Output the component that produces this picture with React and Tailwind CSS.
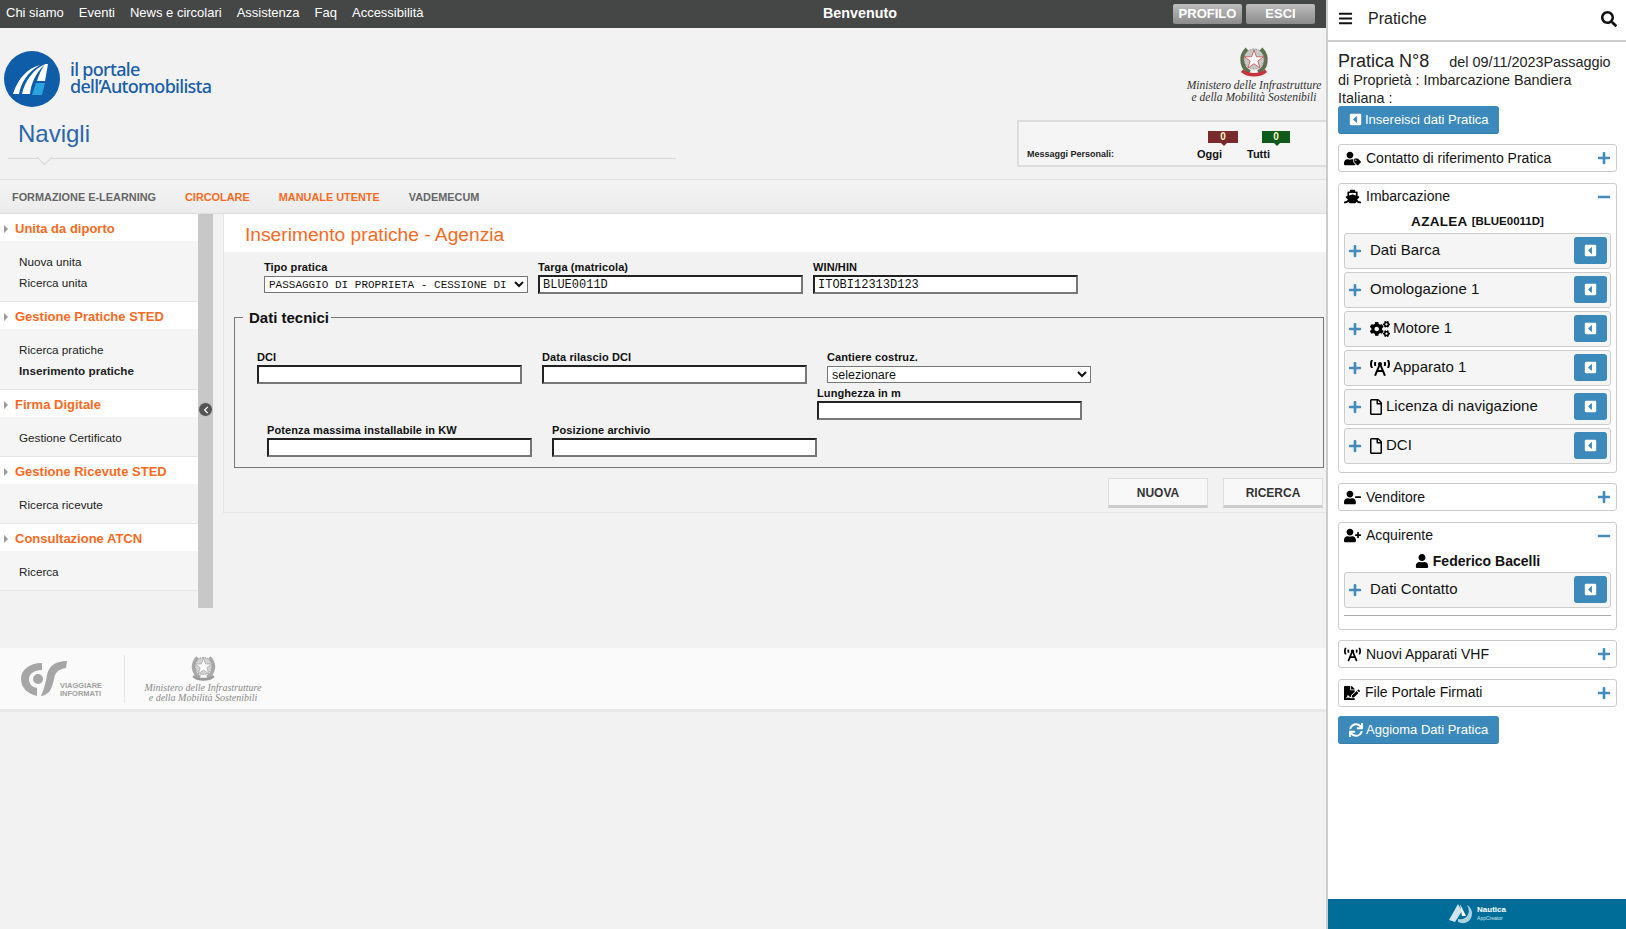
import {
	FaBars,
	FaBroadcastTower,
	FaCaretSquareLeft,
	FaChevronLeft,
	FaCogs,
	FaFileSignature,
	FaMinus,
	FaPlus,
	FaRegFile,
	FaSearch,
	FaShip,
	FaSync,
	FaUser,
	FaUserMinus,
	FaUserPlus,
	FaUserTag,
} from "react-icons/fa";

const topLinks = ["Chi siamo", "Eventi", "News e circolari", "Assistenza", "Faq", "Accessibilità"];

const sideMenu = [
	{ title: "Unita da diporto", items: ["Nuova unita", "Ricerca unita"] },
	{ title: "Gestione Pratiche STED", items: ["Ricerca pratiche", "Inserimento pratiche"] },
	{ title: "Firma Digitale", items: ["Gestione Certificato"] },
	{ title: "Gestione Ricevute STED", items: ["Ricerca ricevute"] },
	{ title: "Consultazione ATCN", items: ["Ricerca"] },
];

function PortaleLogo() {
	return (
		<svg width="56" height="56" viewBox="0 0 56 56">
			<circle cx="28" cy="28" r="28" fill="#0f5ca8" />
			<path d="M9 43L15 43C17 31 24 21 36 14C24 17 14 27 9 43Z" fill="#fff" />
			<path d="M18 43L26 43C27 33 31 23 41 13C30 18 21 29 18 43Z" fill="#fff" />
			<path d="M41 13L44 13L41 30L33 30C35 24 37 18 41 13Z" fill="#fff" />
			<path d="M32 32L41 32L38 44L28 44Z" fill="#29a3dc" />
		</svg>
	);
}

function Emblem({ size = 34, gray = false }) {
	const leaf = gray ? "#a8a8a8" : "#5f7050";
	const ring = gray ? "#d2d2d2" : "#c9c9c4";
	const ribbon = gray ? "#9a9a9a" : "#c8323c";
	const star = gray ? "#9a9a9a" : "#c8323c";
	return (
		<svg width={size} height={size} viewBox="0 0 34 34">
			<path d="M13 27C5 24 2 12 10 4" stroke={leaf} strokeWidth="4" fill="none" />
			<path d="M21 27C29 24 32 12 24 4" stroke={leaf} strokeWidth="4" fill="none" />
			<circle cx="17" cy="14" r="10" fill={ring} stroke="#8c8c8c" strokeWidth="1" strokeDasharray="2 1" />
			<path d="M17 5L19.4 11.8H26.5L20.8 16L23 23L17 18.7L11 23L13.2 16L7.5 11.8H14.6Z" fill="#fff" stroke={star} strokeWidth="0.7" />
			<path d="M4 27C10 33 24 33 30 27L28 24.5C23 29 11 29 6 24.5Z" fill={ribbon} />
		</svg>
	);
}

function CsLogo() {
	return (
		<svg width="46" height="36" viewBox="0 0 46 36">
			<path d="M21 2C8 2 0 9 0 18C0 27 7 33 16 35V27C11 26 8 23 8 18C8 13 13 9 21 9Z" fill="#a6a6a6" />
			<circle cx="17" cy="18" r="5" fill="#a6a6a6" />
			<path d="M46 0C34 0 28 5 26 14C25 21 23 28 20 35C28 34 31 28 33 18C34 11 38 8 45 7Z" fill="#a6a6a6" />
		</svg>
	);
}

function NauticaLogo() {
	return (
		<svg width="26" height="22" viewBox="0 0 26 22">
			<path d="M1 17L10 1L14 8L7 19Z" fill="#cfe6f0" />
			<path d="M12 1L18 13L14 13Z" fill="#ffffff" />
			<path d="M10 19C16 22 24 19 24 10C24 6 21 3 19 2C24 10 18 18 10 16Z" fill="#a9d2e2" />
		</svg>
	);
}

function MinisteroText({ className }) {
	return (
		<div className={`font-['Liberation_Serif',serif] italic text-center ${className}`}>
			<div>Ministero delle Infrastrutture</div>
			<div>e della Mobilità Sostenibili</div>
		</div>
	);
}

function Field({ label, value, className = "" }) {
	return (
		<div className={`w-[265px] ${className}`}>
			<div className="h-[14px] text-[11px] leading-[13px] font-bold tracking-[0.1px] text-[#111]">{label}</div>
			<input
				readOnly
				defaultValue={value}
				className="block w-[265px] h-[19px] border-2 border-t-[#222] border-l-[#222] border-b-[#777] border-r-[#777] bg-white px-[3px] font-['Liberation_Mono',monospace] text-[12px] text-[#111]"
			/>
		</div>
	);
}

function SelectField({ label, value, className = "", selectClass = "" }) {
	return (
		<div className={`w-[265px] ${className}`}>
			<div className="h-[14px] text-[11px] leading-[13px] font-bold tracking-[0.1px] text-[#111]">{label}</div>
			<select
				defaultValue={value}
				className={`block mt-[1px] w-[264px] h-[17px] border border-[#777] bg-white text-[#111] ${selectClass}`}
			>
				<option>{value}</option>
			</select>
		</div>
	);
}

function PanelBox({ icon, title, open = false, children }) {
	return (
		<div className="rounded-[3px] border border-[#ccc] bg-white">
			<div className="flex h-[26px] items-center justify-between pl-[5px] pr-[5px]">
				<div className="flex items-center gap-[5px] text-[14px] text-[#111]">
					{icon}
					<span>{title}</span>
				</div>
				{open ? <FaMinus className="text-[14px] text-[#428bba]" /> : <FaPlus className="text-[14px] text-[#428bba]" />}
			</div>
			{children}
		</div>
	);
}

function SubRow({ icon, title }) {
	return (
		<div className="flex h-[36px] items-center rounded-[3px] border border-[#ccc] bg-[#f5f5f5] pl-[3px] pr-[3px]">
			<FaPlus className="text-[14px] text-[#428bba] shrink-0" />
			<div className="ml-[8px] flex items-center gap-[3px] text-[15px] text-[#111]">
				{icon}
				<span>{title}</span>
			</div>
			<div className="ml-auto flex h-[27px] w-[33px] items-center justify-center rounded-[3px] bg-[#3c8abb]">
				<FaCaretSquareLeft className="text-[13px] text-white" />
			</div>
		</div>
	);
}

function BlueButton({ icon, children }) {
	return (
		<div className="flex h-[28px] w-[161px] items-center gap-[3px] rounded-[3px] border-b border-[#367ea8] bg-[#3c8abb] pl-[11px] text-[13px] text-white">
			{icon}
			<span>{children}</span>
		</div>
	);
}

export default function App() {
	return (
		<div className="flex h-[929px] w-[1626px] overflow-hidden bg-[#f2f2f2] font-['Liberation_Sans',Arial,sans-serif]">
			<div className="w-[1326px] shrink-0">
				{/* top bar */}
				<div className="flex h-[28px] items-center bg-[#454646] pl-[6px] text-white">
					<div className="flex w-[817px] gap-[15px] pb-[2px] text-[13px]">
						{topLinks.map((link) => (
							<span key={link}>{link}</span>
						))}
					</div>
					<span className="text-[14.3px] font-bold">Benvenuto</span>
					<div className="ml-auto mr-[11px] flex gap-[4px]">
						{["PROFILO", "ESCI"].map((label) => (
							<div
								key={label}
								className="flex h-[20px] w-[69px] items-center justify-center rounded-[2px] bg-gradient-to-b from-[#bdbdbd] to-[#8c8c8c] text-[13px] font-bold text-white"
							>
								{label}
							</div>
						))}
					</div>
				</div>

				{/* header */}
				<div className="flex h-[151px] justify-between">
					<div className="w-[680px]">
						<div className="flex items-center gap-[10px] pl-[4px] pt-[23px]">
							<PortaleLogo />
							<div className="mb-[2px] font-['Noto_Sans',sans-serif] text-[18px] font-medium leading-[17px] tracking-[-0.7px] text-[#1a5ea8]">
								<div>il portale</div>
								<div>dell’Automobilista</div>
							</div>
						</div>
						<div className="mt-[14px] pl-[18px] text-[24px] leading-[26px] text-[#2a66ae]">Navigli</div>
						<div className="relative ml-[8px] mt-[11px] h-px w-[668px] bg-[#d6d6d6]">
							<div className="absolute left-[31px] top-[-6px] h-[11px] w-[11px] rotate-45 border-b border-r border-[#d6d6d6] bg-[#f2f2f2]" />
						</div>
					</div>
					<div className="w-[309px]">
						<div className="flex flex-col items-center pl-[165px] pt-[17px]">
							<Emblem />
							<MinisteroText className="text-[11.5px] leading-[12px] text-[#333]" />
						</div>
						<div className="mt-[17px] flex h-[47px] border-2 border-r-0 border-[#ddd] bg-[#f5f5f5] pl-[8px] pt-[9px]">
							<div className="mt-[17px] w-[170px] text-[9px] font-bold text-[#222]">Messaggi Personali:</div>
							<div className="w-[50px]">
								<div className="relative ml-[11px] h-[12px] w-[30px] bg-[#7a2a2a] text-center text-[10px] leading-[12px] font-bold text-[#fff3c4]">
									0
									<div className="absolute bottom-[-3px] left-[13px] h-0 w-0 border-x-[3px] border-t-[3px] border-x-transparent border-t-[#7a2a2a]" />
								</div>
								<div className="mt-[3px] text-[11px] font-bold text-[#111]">Oggi</div>
							</div>
							<div>
								<div className="relative ml-[15px] h-[12px] w-[28px] bg-[#0d5a1a] text-center text-[10px] leading-[12px] font-bold text-[#fff3c4]">
									0
									<div className="absolute bottom-[-3px] left-[12px] h-0 w-0 border-x-[3px] border-t-[3px] border-x-transparent border-t-[#0d5a1a]" />
								</div>
								<div className="mt-[3px] text-[11px] font-bold text-[#111]">Tutti</div>
							</div>
						</div>
					</div>
				</div>

				{/* nav */}
				<div className="flex h-[35px] items-center gap-[29px] border-y border-[#dedede] bg-gradient-to-b from-[#f4f4f4] to-[#ececec] pl-[12px] pt-[1px] text-[10.9px] font-bold text-[#666]">
					<span>FORMAZIONE E-LEARNING</span>
					<span className="text-[#f96a1e]">CIRCOLARE</span>
					<span className="text-[#f96a1e]">MANUALE UTENTE</span>
					<span>VADEMECUM</span>
				</div>

				<div className="flex items-start">
					{/* side menu */}
					<div className="w-[198px] shrink-0">
						{sideMenu.map((section) => (
							<div key={section.title} className="border-b border-[#e6e6e6]">
								<div className="flex h-[27px] items-center bg-white pl-[4px] pt-[2px] text-[13px] font-bold text-[#f96a1e]">
									<div className="mr-[7px] h-0 w-0 border-y-[4px] border-l-[4px] border-y-transparent border-l-[#999]" />
									{section.title}
								</div>
								<div className="bg-[#f5f5f5] pb-[8px] pl-[19px] pt-[10px] text-[11.7px] leading-[21px] text-[#222]">
									{section.items.map((item) => (
										<div key={item} className={item === "Inserimento pratiche" ? "font-bold" : ""}>
											{item}
										</div>
									))}
								</div>
							</div>
						))}
					</div>
					<div className="relative h-[394px] w-[15px] shrink-0 bg-[#c8c8c8]">
						<div className="absolute left-0 top-[188px] flex h-[15px] w-[15px] items-center justify-center rounded-full border border-[#ccc] bg-[#555]">
							<FaChevronLeft className="text-[8px] text-white" />
						</div>
					</div>

					{/* form panel */}
					<div className="ml-[10px] h-[299px] w-[1104px] border-b border-l border-[#e6e6e6]">
						<div className="flex h-[38px] items-center bg-white pl-[21px] pt-[5px] text-[19.2px] text-[#f96a1e]">
							Inserimento pratiche - Agenzia
						</div>
						<div className="flex gap-[10px] pl-[40px] pt-[9px]">
							<SelectField
								label="Tipo pratica"
								value="PASSAGGIO DI PROPRIETA - CESSIONE DI BENE"
								selectClass="font-['Liberation_Mono',monospace] text-[11px]"
							/>
							<Field label="Targa (matricola)" value="BLUE0011D" className="-ml-[1px]" />
							<Field label="WIN/HIN" value="ITOBI12313D123" />
						</div>
						<fieldset className="ml-[10px] mt-[15px] h-[159px] w-[1090px] border border-[#777] pl-[22px]">
							<legend className="-ml-[14px] pl-[6px] pr-[2px] text-[15px] font-bold leading-[17px] text-[#111]">Dati tecnici</legend>
							<div className="flex gap-[20px] pt-[25px]">
								<Field label="DCI" />
								<Field label="Data rilascio DCI" />
								<div>
									<SelectField label="Cantiere costruz." value="selezionare" selectClass="text-[12.5px]" />
									<Field label="Lunghezza in m" className="-ml-[10px] mt-[4px]" />
								</div>
							</div>
							<div className="mt-[4px] flex gap-[20px] pl-[10px]">
								<Field label="Potenza massima installabile in KW" />
								<Field label="Posizione archivio" />
							</div>
						</fieldset>
						<div className="mt-[10px] flex justify-end gap-[15px] pr-[3px]">
							{["NUOVA", "RICERCA"].map((label) => (
								<div
									key={label}
									className="flex h-[30px] w-[100px] items-center justify-center border border-b-[3px] border-[#ddd] border-b-[#ccc] bg-[#f8f8f8] pt-[1px] text-[12px] font-bold text-[#333]"
								>
									{label}
								</div>
							))}
						</div>
					</div>
				</div>

				{/* footer */}
				<div className="mt-[40px] flex h-[64px] items-center border-b-[3px] border-[#e8e8e8] bg-[#fafafa] pl-[21px]">
					<div className="relative flex h-[36px] w-[103px]">
						<CsLogo />
						<div className="absolute left-[39px] top-[21px] text-[7.5px] font-bold leading-[8px] text-[#a0a0a0]">
							VIAGGIARE
							<br />
							INFORMATI
						</div>
					</div>
					<div className="h-[48px] w-px bg-[#e6e6e6]" />
					<div className="ml-[20px] flex w-[116px] flex-col items-center">
						<Emblem size={29} gray />
						<MinisteroText className="whitespace-nowrap text-[10px] leading-[10px] text-[#8a8a8a]" />
					</div>
				</div>
			</div>

			{/* right panel */}
			<div className="flex w-[300px] shrink-0 flex-col border-l-2 border-[#ccc] bg-white">
				<div className="flex h-[42px] shrink-0 items-center justify-between border-b-2 border-[#ccc] pb-[3px] pl-[10px] pr-[9px]">
					<div className="flex items-center gap-[15px]">
						<FaBars className="text-[15px] text-[#111]" />
						<span className="text-[16px] text-[#222]">Pratiche</span>
					</div>
					<FaSearch className="text-[16px] text-[#111]" />
				</div>
				<div className="flex flex-col pl-[10px] pr-[9px]">
					<div className="pt-[9px] text-[14.4px] leading-[18px] text-[#222]">
						<span className="mr-[20px] text-[18px] leading-[20px]">Pratica N°8</span>
						del 09/11/2023Passaggio di Proprietà : Imbarcazione Bandiera Italiana :
					</div>
					<div className="-mt-[1px] mb-[10px]">
						<BlueButton icon={<FaCaretSquareLeft className="text-[13px]" />}>Insereisci dati Pratica</BlueButton>
					</div>
					<div className="flex flex-col gap-[10.5px]">
						<PanelBox icon={<FaUserTag className="text-[17px] text-black" />} title="Contatto di riferimento Pratica" />
						<PanelBox icon={<FaShip className="text-[17px] text-black" />} title="Imbarcazione" open>
							<div className="px-[5px] pb-[8px]">
								<div className="flex h-[23px] items-center justify-center gap-[4px] pt-[2px] text-[#111]">
									<span className="text-[13.5px] font-bold tracking-[0.3px]">AZALEA</span>
									<span className="text-[11.5px] font-bold">[BLUE0011D]</span>
								</div>
								<div className="flex flex-col gap-[3px]">
									<SubRow title="Dati Barca" />
									<SubRow title="Omologazione 1" />
									<SubRow icon={<FaCogs className="text-[20px] text-black" />} title="Motore 1" />
									<SubRow icon={<FaBroadcastTower className="text-[20px] text-black" />} title="Apparato 1" />
									<SubRow icon={<FaRegFile className="-ml-[2px] -mr-[1px] text-[16px] text-black" />} title="Licenza di navigazione" />
									<SubRow icon={<FaRegFile className="-ml-[2px] -mr-[1px] text-[16px] text-black" />} title="DCI" />
								</div>
							</div>
						</PanelBox>
						<PanelBox icon={<FaUserMinus className="text-[17px] text-black" />} title="Venditore" />
						<PanelBox icon={<FaUserPlus className="text-[17px] text-black" />} title="Acquirente" open>
							<div className="px-[5px] pb-[13px]">
								<div className="flex h-[23px] items-center justify-center gap-[4px] pt-[2px] text-[14px] font-bold text-[#111]">
									<FaUser className="text-[14px] text-black" />
									Federico Bacelli
								</div>
								<SubRow title="Dati Contatto" />
								<div className="mt-[7px] h-px bg-[#aaa]" />
							</div>
						</PanelBox>
						<PanelBox icon={<FaBroadcastTower className="text-[17px] text-black" />} title="Nuovi Apparati VHF" />
						<PanelBox icon={<FaFileSignature className="text-[16px] text-black" />} title="File Portale Firmati" />
						<div className="-mt-[1px]">
							<BlueButton icon={<FaSync className="text-[14px]" />}>Aggioma Dati Pratica</BlueButton>
						</div>
					</div>
				</div>
				<div className="mt-auto flex h-[30px] shrink-0 items-center justify-center gap-[3px] bg-[#006d99] text-white">
					<NauticaLogo />
					<div className="text-[7.5px] leading-[8px]">
						<div className="text-[8px] font-bold">Nautica</div>
						<div className="text-[5px] text-[#cfe6f0]">AppCreator</div>
					</div>
				</div>
			</div>
		</div>
	);
}
